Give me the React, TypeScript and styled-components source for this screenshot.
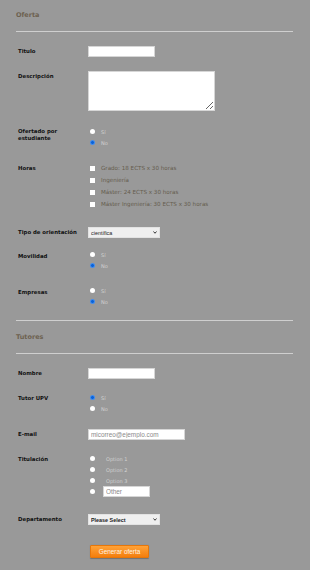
import React from "react";
import styled, { createGlobalStyle, css } from "styled-components";

const GlobalStyle = createGlobalStyle`
  html, body {
    margin: 0;
    padding: 0;
    background: #999999;
  }
  body {
    font-family: "DejaVu Sans", Verdana, sans-serif;
  }
`;

const Page = styled.form`
  width: 310px;
  min-height: 570px;
  box-sizing: border-box;
  padding: 11px 17px 12px 16px;
  background: #999999;
`;

const SectionTitle = styled.h2`
  margin: 0;
  height: 9px;
  line-height: 9px;
  font-size: 6.5px;
  font-weight: bold;
  color: #6d6150;
`;

const Divider = styled.hr<{ $top: number }>`
  margin: ${({ $top }) => $top}px 0 0 0;
  border: 0;
  height: 1px;
  background: #cfcfcf;
`;

const Row = styled.div<{ $space: number }>`
  display: grid;
  grid-template-columns: 72px 1fr;
  align-items: start;
  margin-top: ${({ $space }) => $space}px;
`;

const Label = styled.label<{ $offset?: number }>`
  padding-left: 2px;
  padding-top: ${({ $offset = 2 }) => $offset}px;
  font-size: 5.4px;
  line-height: 7px;
  font-weight: bold;
  color: #111111;
  white-space: nowrap;
`;

const fieldBox = css`
  box-sizing: border-box;
  border: 1px solid #d6d6d6;
  background: #ffffff;
  outline: none;
  padding: 0 2px;
  font-family: "Liberation Sans", Arial, sans-serif;
`;

const TextInput = styled.input<{ $width: number }>`
  ${fieldBox};
  display: block;
  width: ${({ $width }) => $width}px;
  height: 11px;
  font-size: 6.4px;
  color: #333;
  &::placeholder {
    color: #8a8a8a;
  }
`;

const TextArea = styled.textarea`
  ${fieldBox};
  display: block;
  width: 127px;
  height: 40px;
  resize: both;
`;

const SelectWrap = styled.div`
  position: relative;
  width: 72px;
  height: 11px;
`;

const Select = styled.select<{ $bold?: boolean }>`
  ${fieldBox};
  display: block;
  appearance: none;
  width: 100%;
  height: 100%;
  padding: 0 8px 0 2px;
  background: #efefef;
  border-color: #e2e2e2;
  font-size: 5.4px;
  font-weight: ${({ $bold }) => ($bold ? "bold" : "normal")};
  color: #222;
`;

const Chevron = styled.svg`
  position: absolute;
  right: 3px;
  top: 4px;
  width: 4px;
  height: 3px;
  pointer-events: none;
`;

const OptionList = styled.div<{ $step: number }>`
  display: flex;
  flex-direction: column;
  & > * {
    height: ${({ $step }) => $step}px;
  }
`;

const OptionLine = styled.label`
  display: flex;
  align-items: center;
  padding-left: 2px;
`;

const Radio = styled.input.attrs({ type: "radio" })`
  appearance: none;
  margin: 0 6px 0 0;
  width: 5px;
  height: 5px;
  border-radius: 50%;
  background: #ffffff;
  flex: none;
  &:checked {
    background: radial-gradient(circle, #0b62d6 0 35%, #3f8cf0 45% 100%);
  }
`;

const Check = styled.input.attrs({ type: "checkbox" })`
  appearance: none;
  margin: 0 6px 0 0;
  width: 5px;
  height: 5px;
  border-radius: 0;
  background: #ffffff;
  flex: none;
`;

const RadioText = styled.span<{ $pad?: number }>`
  padding-left: ${({ $pad = 0 }) => $pad}px;
  font-size: 5px;
  color: #d2d2d2;
`;

const CheckText = styled.span`
  font-size: 5.6px;
  color: #655c4e;
`;

const SubmitButton = styled.button`
  margin-left: 2px;
  width: 59px;
  height: 13px;
  padding: 0;
  border: 1px solid #e7770a;
  border-radius: 1px;
  background: linear-gradient(#ffa238, #f47e0d);
  font-family: "Liberation Sans", Arial, sans-serif;
  font-size: 6.4px;
  color: #fff4e4;
  box-shadow: 0 0.5px 1px rgba(0, 0, 0, 0.25);
`;

type Choice = { text: string; checked?: boolean };

const RadioGroup = ({
  name,
  choices,
  pad,
}: {
  name: string;
  choices: Choice[];
  pad?: number;
}) => (
  <OptionList $step={11}>
    {choices.map((c) => (
      <OptionLine key={c.text}>
        <Radio name={name} defaultChecked={c.checked} />
        <RadioText $pad={pad}>{c.text}</RadioText>
      </OptionLine>
    ))}
  </OptionList>
);

const siNo = (yes: boolean): Choice[] => [
  { text: "Sí", checked: yes },
  { text: "No", checked: !yes },
];

const horas = [
  "Grado: 18 ECTS x 30 horas",
  "Ingeniería",
  "Máster: 24 ECTS x 30 horas",
  "Máster Ingeniería: 30 ECTS x 30 horas",
];

const ChevronIcon = () => (
  <Chevron viewBox="0 0 8 6">
    <path d="M1 1 L4 4.5 L7 1" stroke="#222" strokeWidth="1.8" fill="none" />
  </Chevron>
);

const App = () => (
  <>
    <GlobalStyle />
    <Page onSubmit={(e) => e.preventDefault()}>
      <SectionTitle>Oferta</SectionTitle>
      <Divider $top={11} />

      <Row $space={14}>
        <Label>Titulo</Label>
        <TextInput $width={67} />
      </Row>

      <Row $space={14}>
        <Label>Descripción</Label>
        <TextArea />
      </Row>

      <Row $space={15}>
        <Label>
          Ofertado por
          <br />
          estudiante
        </Label>
        <RadioGroup name="ofertado" choices={siNo(false)} />
      </Row>

      <Row $space={14}>
        <Label $offset={3}>Horas</Label>
        <OptionList $step={12}>
          {horas.map((h) => (
            <OptionLine key={h}>
              <Check />
              <CheckText>{h}</CheckText>
            </OptionLine>
          ))}
        </OptionList>
      </Row>

      <Row $space={17}>
        <Label $offset={2}>Tipo de orientación</Label>
        <SelectWrap>
          <Select defaultValue="cientifica">
            <option value="cientifica">científica</option>
            <option value="profesional">profesional</option>
          </Select>
          <ChevronIcon />
        </SelectWrap>
      </Row>

      <Row $space={11}>
        <Label $offset={4}>Movilidad</Label>
        <RadioGroup name="movilidad" choices={siNo(false)} />
      </Row>

      <Row $space={14}>
        <Label $offset={4}>Empresas</Label>
        <RadioGroup name="empresas" choices={siNo(false)} />
      </Row>

      <Divider $top={13} />
      <Row $space={12} as="div">
        <SectionTitle>Tutores</SectionTitle>
      </Row>
      <Divider $top={11} />

      <Row $space={14}>
        <Label>Nombre</Label>
        <TextInput $width={67} />
      </Row>

      <Row $space={13}>
        <Label $offset={3}>Tutor UPV</Label>
        <RadioGroup name="upv" choices={siNo(true)} />
      </Row>

      <Row $space={15}>
        <Label>E-mail</Label>
        <TextInput $width={97} placeholder="micorreo@ejemplo.com" />
      </Row>

      <Row $space={13}>
        <Label $offset={3}>Titulación</Label>
        <OptionList $step={11}>
          {["Option 1", "Option 2", "Option 3"].map((o) => (
            <OptionLine key={o}>
              <Radio name="titulacion" />
              <RadioText $pad={5}>{o}</RadioText>
            </OptionLine>
          ))}
          <OptionLine>
            <Radio name="titulacion" />
            <TextInput $width={47} placeholder="Other" style={{ marginLeft: 2 }} />
          </OptionLine>
        </OptionList>
      </Row>

      <Row $space={17}>
        <Label>Departamento</Label>
        <SelectWrap>
          <Select $bold defaultValue="">
            <option value="">Please Select</option>
          </Select>
          <ChevronIcon />
        </SelectWrap>
      </Row>

      <Row $space={20}>
        <span />
        <SubmitButton type="submit">Generar oferta</SubmitButton>
      </Row>
    </Page>
  </>
);

export default App;
